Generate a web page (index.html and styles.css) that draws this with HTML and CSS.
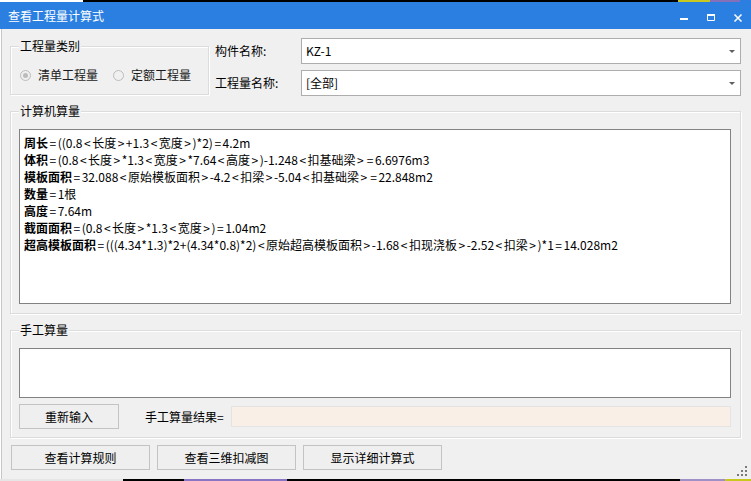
FILE: index.html
```html
<!DOCTYPE html>
<html lang="zh-CN">
<head>
<meta charset="utf-8">
<title>查看工程量计算式</title>
<link rel="stylesheet" href="styles.css">
</head>
<body>
<div class="desk-top"></div>
<div class="titlebar">
  <span class="title">查看工程量计算式</span>
  <div class="controls">
    <span class="ctl"><svg width="10" height="10" viewBox="0 0 10 10"><rect x="1" y="5" width="8" height="2" fill="#fff"/></svg></span>
    <span class="ctl"><svg width="10" height="10" viewBox="0 0 10 10"><path d="M1.5 1.5h7v6h-7z" fill="none" stroke="#fff" stroke-width="1"/><rect x="1" y="1" width="8" height="2" fill="#fff"/></svg></span>
    <span class="ctl"><svg width="10" height="10" viewBox="0 0 10 10"><path d="M1.5 1.5l7 7M8.5 1.5l-7 7" stroke="#fff" stroke-width="1.5" fill="none"/></svg></span>
  </div>
</div>
<div class="client">
  <div class="top-row">
    <div class="group type-group">
      <span class="legend">工程量类别</span>
      <div class="radios">
        <span class="radio"><span class="dot checked"></span>清单工程量</span>
        <span class="radio"><span class="dot"></span>定额工程量</span>
      </div>
    </div>
    <div class="fields">
      <div class="field"><span class="flabel">构件名称:</span><div class="combo"><span>KZ-1</span><span class="arrow"></span></div></div>
      <div class="field"><span class="flabel">工程量名称:</span><div class="combo"><span>[全部]</span><span class="arrow"></span></div></div>
    </div>
  </div>

  <div class="group calc-group">
    <span class="legend">计算机算量</span>
    <div class="textbox formula">
      <div><b>周长</b><i>=</i>((0.8<i>&lt;</i>长度<i>&gt;</i>+1.3<i>&lt;</i>宽度<i>&gt;</i>)*2)<i>=</i>4.2m</div>
      <div><b>体积</b><i>=</i>(0.8<i>&lt;</i>长度<i>&gt;</i>*1.3<i>&lt;</i>宽度<i>&gt;</i>*7.64<i>&lt;</i>高度<i>&gt;</i>)-1.248<i>&lt;</i>扣基础梁<i>&gt;</i><i>=</i>6.6976m3</div>
      <div><b>模板面积</b><i>=</i>32.088<i>&lt;</i>原始模板面积<i>&gt;</i>-4.2<i>&lt;</i>扣梁<i>&gt;</i>-5.04<i>&lt;</i>扣基础梁<i>&gt;</i><i>=</i>22.848m2</div>
      <div><b>数量</b><i>=</i>1根</div>
      <div><b>高度</b><i>=</i>7.64m</div>
      <div><b>截面面积</b><i>=</i>(0.8<i>&lt;</i>长度<i>&gt;</i>*1.3<i>&lt;</i>宽度<i>&gt;</i>)<i>=</i>1.04m2</div>
      <div><b>超高模板面积</b><i>=</i>(((4.34*1.3)*2+(4.34*0.8)*2)<i>&lt;</i>原始超高模板面积<i>&gt;</i>-1.68<i>&lt;</i>扣现浇板<i>&gt;</i>-2.52<i>&lt;</i>扣梁<i>&gt;</i>)*1<i>=</i>14.028m2</div>
    </div>
  </div>

  <div class="group manual-group">
    <span class="legend">手工算量</span>
    <div class="textbox manual"></div>
    <div class="manual-row">
      <span class="btn reinput">重新输入</span>
      <span class="rlabel">手工算量结果=</span>
      <div class="result"></div>
    </div>
  </div>

  <div class="bottom-buttons">
    <span class="btn wide">查看计算规则</span>
    <span class="btn wide">查看三维扣减图</span>
    <span class="btn wide">显示详细计算式</span>
  </div>

  <svg class="grip" width="12" height="10" viewBox="0 0 12 10">
    <rect x="8" y="0" width="2" height="2" fill="#7a7a7a"/>
    <rect x="4" y="4" width="2" height="2" fill="#7a7a7a"/>
    <rect x="8" y="4" width="2" height="2" fill="#7a7a7a"/>
    <rect x="0" y="8" width="2" height="2" fill="#7a7a7a"/>
    <rect x="4" y="8" width="2" height="2" fill="#7a7a7a"/>
    <rect x="8" y="8" width="2" height="2" fill="#7a7a7a"/>
  </svg>
</div>
<div class="desk-bottom"></div>
</body>
</html>
```

FILE: styles.css
```css
* { box-sizing: border-box; }
html, body { margin: 0; padding: 0; }
body {
  width: 751px;
  height: 481px;
  overflow: hidden;
  background: #fff;
  font-family: "Noto Sans CJK SC", "Microsoft YaHei", sans-serif;
  font-size: 12px;
  color: #000;
}
.desk-top {
  height: 2px;
  background: linear-gradient(to right, #fff 0 83px, #000 83px 678px, #c8c81e 678px 710px, #8470b8 710px 740px, #2b7fe1 740px);
}
.titlebar {
  height: 27px;
  background: #2b7fe1;
  display: flex;
  align-items: center;
  padding-left: 8px;
}
.title { color: #fff; font-size: 12px; line-height: 16px; }
.controls { margin-left: auto; display: flex; }
.ctl { width: 27px; height: 27px; display: flex; align-items: center; justify-content: center; padding-top: 4px; }
.ctl svg { display: block; }

.client {
  position: relative;
  margin-left: 1px;
  height: 450px;
  background: #f0f0f0;
  border-left: 1px solid #c6c6c6;
  padding: 9px 9px 0 8px;
}
.top-row { display: flex; align-items: flex-start; }
.group {
  position: relative;
  border: 1px solid #dcdcdc;
  box-shadow: inset 1px 1px 0 #fff, 1px 1px 0 #fff;
}
.legend {
  position: absolute;
  top: -9px;
  left: 8px;
  padding: 0 1px;
  background: #f0f0f0;
  line-height: 16px;
  font-size: 12px;
  color: #000;
}
.type-group {
  width: 199px;
  height: 49px;
  margin-top: 8px;
}
.radios { display: flex; padding: 20px 0 0 9px; }
.radio { display: flex; align-items: center; line-height: 16px; color: #1a1a1a; margin-right: 15px; }
.dot {
  width: 11px; height: 11px; border-radius: 50%;
  border: 1px solid #bcbcbc;
  background: #f0f0f0;
  margin-right: 7px;
  position: relative;
}
.dot.checked::after {
  content: "";
  position: absolute;
  left: 2px; top: 2px;
  width: 5px; height: 5px; border-radius: 50%;
  background: #bcbcbc;
}
.fields { margin-left: 6px; display: flex; flex-direction: column; gap: 6px; }
.field { display: flex; align-items: center; }
.flabel { width: 86px; line-height: 16px; }
.combo {
  width: 440px; height: 26px;
  background: #fff;
  border: 1px solid #adadad;
  display: flex; align-items: center;
  padding-left: 4px; padding-right: 5px;
}
.combo span:first-child { flex: 1; line-height: 16px; }
.arrow {
  width: 0; height: 0;
  border-left: 3px solid transparent;
  border-right: 3px solid transparent;
  border-top: 3px solid #5f5f5f;
}

.calc-group {
  margin-top: 15px;
  width: 731px;
  height: 203px;
  padding: 17px 0 0 8px;
}
.textbox {
  width: 712px;
  background: #fff;
  border: 1px solid #828282;
}
.formula {
  height: 175px;
  padding: 4px 0 0 4px;
  line-height: 17px;
  white-space: nowrap;
}
.formula b { font-weight: bold; }
.formula i { font-style: normal; padding: 0 1.5px; }
.manual-group {
  margin-top: 16px;
  width: 731px;
  height: 108px;
  padding: 17px 0 0 8px;
}
.manual { height: 50px; }
.manual-row { display: flex; align-items: center; margin-top: 6px; }
.btn {
  display: flex; align-items: center; justify-content: center;
  height: 25px;
  border: 1px solid #c3c3c3;
  background: #efefef;
  line-height: 16px;
}
.reinput { width: 100px; }
.rlabel { margin-left: 26px; width: 86px; }
.result {
  width: 500px; height: 21px;
  background: #faefe6;
  border: 1px solid #e3e3e3;
}
.bottom-buttons { display: flex; gap: 7px; margin-top: 7px; padding-left: 1px; }
.wide { width: 139px; }
.grip { position: absolute; right: 2px; bottom: 3px; }

.desk-bottom {
  height: 2px;
  background: linear-gradient(to right, #e6e6e6 0 123px, #000 123px 184px, #8a74c4 184px 287px, #000 287px 680px, #a090c8 680px 725px, #c8c81e 725px);
}
```
